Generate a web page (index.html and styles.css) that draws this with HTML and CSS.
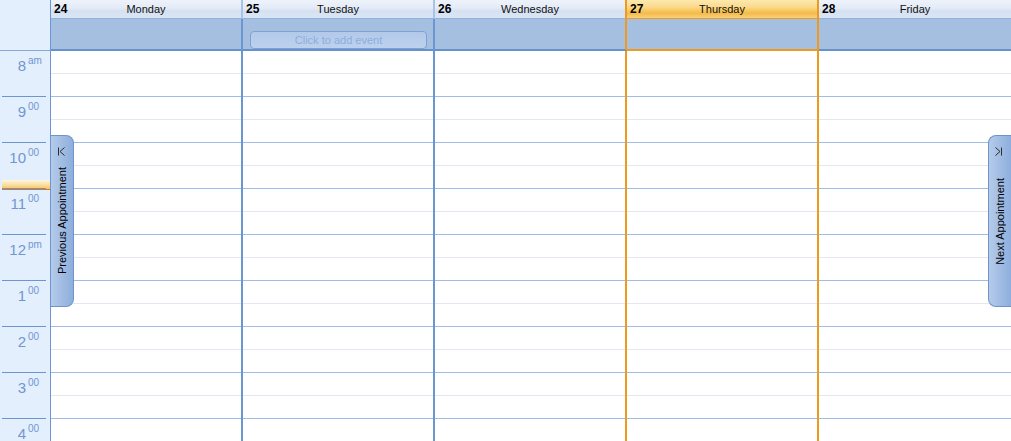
FILE: index.html
```html
<!DOCTYPE html>
<html lang="en">
<head>
<meta charset="utf-8">
<title>Week view</title>
<link rel="stylesheet" href="styles.css">
</head>
<body>
<div class="cal">
  <div class="head">
    <div class="corner"></div>
    <div class="dhead">
      <div class="title"><b class="num">24</b><span class="name">Monday</span></div>
      <div class="allday"></div>
    </div>
    <div class="dhead">
      <div class="title"><b class="num">25</b><span class="name">Tuesday</span></div>
      <div class="allday"><div class="add">Click to add event</div></div>
    </div>
    <div class="dhead pre-today">
      <div class="title"><b class="num">26</b><span class="name">Wednesday</span></div>
      <div class="allday"></div>
    </div>
    <div class="dhead today">
      <div class="title"><b class="num">27</b><span class="name">Thursday</span></div>
      <div class="allday"></div>
    </div>
    <div class="dhead last">
      <div class="title"><b class="num">28</b><span class="name">Friday</span></div>
      <div class="allday"></div>
    </div>
  </div>

  <div class="body">
    <div class="times">
      <div class="now"></div>
      <div class="hour"><span class="hnum">8</span><span class="hsup">am</span></div>
      <div class="hour"><span class="hnum">9</span><span class="hsup">00</span></div>
      <div class="hour"><span class="hnum">10</span><span class="hsup">00</span></div>
      <div class="hour"><span class="hnum">11</span><span class="hsup">00</span></div>
      <div class="hour"><span class="hnum">12</span><span class="hsup">pm</span></div>
      <div class="hour"><span class="hnum">1</span><span class="hsup">00</span></div>
      <div class="hour"><span class="hnum">2</span><span class="hsup">00</span></div>
      <div class="hour"><span class="hnum">3</span><span class="hsup">00</span></div>
      <div class="hour"><span class="hnum">4</span><span class="hsup">00</span></div>
    </div>
    <div class="col"></div>
    <div class="col"></div>
    <div class="col pre-today"></div>
    <div class="col today"></div>
    <div class="col last"></div>

    <div class="tab prev">
      <svg class="ico" width="7" height="9" viewBox="0 0 7 9"><path d="M0.5 0.5V8.5M6.5 0.5L2 4.5L6.5 8.5" fill="none" stroke="#2b2b2b" stroke-width="1"/></svg>
      <span class="tabtext">Previous Appointment</span>
    </div>
    <div class="tab next">
      <svg class="ico" width="7" height="9" viewBox="0 0 7 9"><path d="M0.5 0.5L5 4.5L0.5 8.5M6.5 0.5V8.5" fill="none" stroke="#2b2b2b" stroke-width="1"/></svg>
      <span class="tabtext">Next Appointment</span>
    </div>
  </div>
</div>
<script>
  // build half-hour slots
  document.querySelectorAll('.col').forEach(function (c) {
    for (var i = 0; i < 18; i++) {
      var d = document.createElement('div');
      d.className = 'slot ' + (i % 2 ? 'full' : 'half');
      c.appendChild(d);
    }
  });
</script>
</body>
</html>
```

FILE: styles.css
```css
html, body {
  margin: 0;
  padding: 0;
  background: #ffffff;
  overflow: hidden;
}

.cal {
  width: 1011px;
  height: 441px;
  overflow: hidden;
  font-family: "Liberation Sans", Arial, sans-serif;
  font-size: 11px;
  color: #111;
}

/* ---------- header ---------- */
.head {
  display: grid;
  grid-template-columns: 51px repeat(5, 192px);
  height: 51px;
}

.corner {
  background: #e3effd;
  border-right: 1px solid #6a96d2;
  border-bottom: 1px solid #86a8dc;
  box-sizing: border-box;
  height: 51px;
}

.dhead {
  display: flex;
  flex-direction: column;
}

.title {
  height: 19px;
  box-sizing: border-box;
  border-bottom: 1px solid #8fb1e2;
  border-right: 2px solid #a9c3e8;
  background: linear-gradient(#eef3fb 0%, #e4ebf7 45%, #d5e1f2 60%, #dbe5f4 100%);
  display: grid;
  grid-template-columns: 1fr auto 1fr;
  align-items: center;
  line-height: 18px;
}

.num {
  justify-self: start;
  padding-left: 3px;
  font-size: 12px;
  font-weight: bold;
  color: #000;
}

.name {
  font-size: 11px;
  color: #111;
}

.allday {
  height: 32px;
  box-sizing: border-box;
  background: #a5bfe1;
  border-right: 2px solid #6a96d2;
  border-bottom: 2px solid #6591cd;
  padding: 12px 6px 0 7px;
}

.add {
  height: 18px;
  box-sizing: border-box;
  border: 1px solid #7ea2d6;
  border-radius: 4px;
  background: linear-gradient(#b3c9e9, #bdd1ed);
  color: #8cadde;
  text-align: center;
  font-size: 11px;
  line-height: 16px;
}

.dhead.pre-today .title,
.dhead.pre-today .allday {
  border-right-color: #ee9a1f;
}

.dhead.today .title {
  background: linear-gradient(#fde9b0 0%, #fbd98a 40%, #f7c458 62%, #f5bb4e 75%, #f9d17c 100%);
  border-bottom-color: #ee9a1f;
  border-right-color: #ee9a1f;
}

.dhead.today .allday {
  border-right-color: #ee9a1f;
  border-bottom-color: #ee9a1f;
}

.dhead.last .title,
.dhead.last .allday {
  border-right: 0;
}

/* ---------- body ---------- */
.body {
  position: relative;
  display: grid;
  grid-template-columns: 51px repeat(5, 192px);
  height: 390px;
  overflow: hidden;
}

.times {
  position: relative;
  background: #e3effd;
  border-right: 1px solid #6a96d2;
  color: #7196d0;
}

.now {
  position: absolute;
  left: 2px;
  right: 0;
  top: 129px;
  height: 10px;
  background: linear-gradient(#fdf6e2 0%, #fbe3ad 40%, #f6c663 88%, #df7a12 90%, #df7a12 100%);
  z-index: 0;
}

.hour {
  position: relative;
  z-index: 1;
  margin-left: 2px;
  width: 44px;
  height: 46px;
  box-sizing: border-box;
  border-bottom: 1px solid #6a96d2;
  display: flex;
  align-items: flex-start;
}

.hnum {
  width: 24px;
  text-align: right;
  font-size: 15px;
  line-height: 17px;
  padding-top: 6px;
}

.hsup {
  margin-left: 2px;
  margin-top: 4px;
  font-size: 10px;
  line-height: 12px;
}

.col {
  background: #fff;
  border-right: 2px solid #6a96d2;
}

.col.pre-today,
.col.today {
  border-right-color: #ee9a1f;
}

.col.last {
  border-right: 0;
}

.slot {
  height: 23px;
  box-sizing: border-box;
  border-bottom: 1px solid #e4e7f0;
}

.slot.full {
  border-bottom-color: #9fbce6;
}

/* ---------- navigation tabs ---------- */
.tab {
  position: absolute;
  top: 84px;
  width: 23px;
  height: 172px;
  box-sizing: border-box;
  border: 1px solid #6f94cc;
  display: flex;
  align-items: center;
  justify-content: center;
}

.tab.prev {
  left: 51px;
  border-left: 0;
  border-radius: 0 8px 8px 0;
  background: linear-gradient(to right, #b5cbea, #8eaedd);
}

.tab.next {
  right: 0;
  border-right: 0;
  border-radius: 8px 0 0 8px;
  background: linear-gradient(to right, #b5cbea, #8eaedd);
}

.ico {
  position: absolute;
  top: 11px;
  left: 7px;
}

.tab.next .ico {
  left: 6px;
}

.tabtext {
  writing-mode: vertical-rl;
  transform: rotate(180deg);
  font-size: 11px;
  color: #000;
  white-space: nowrap;
}
```
